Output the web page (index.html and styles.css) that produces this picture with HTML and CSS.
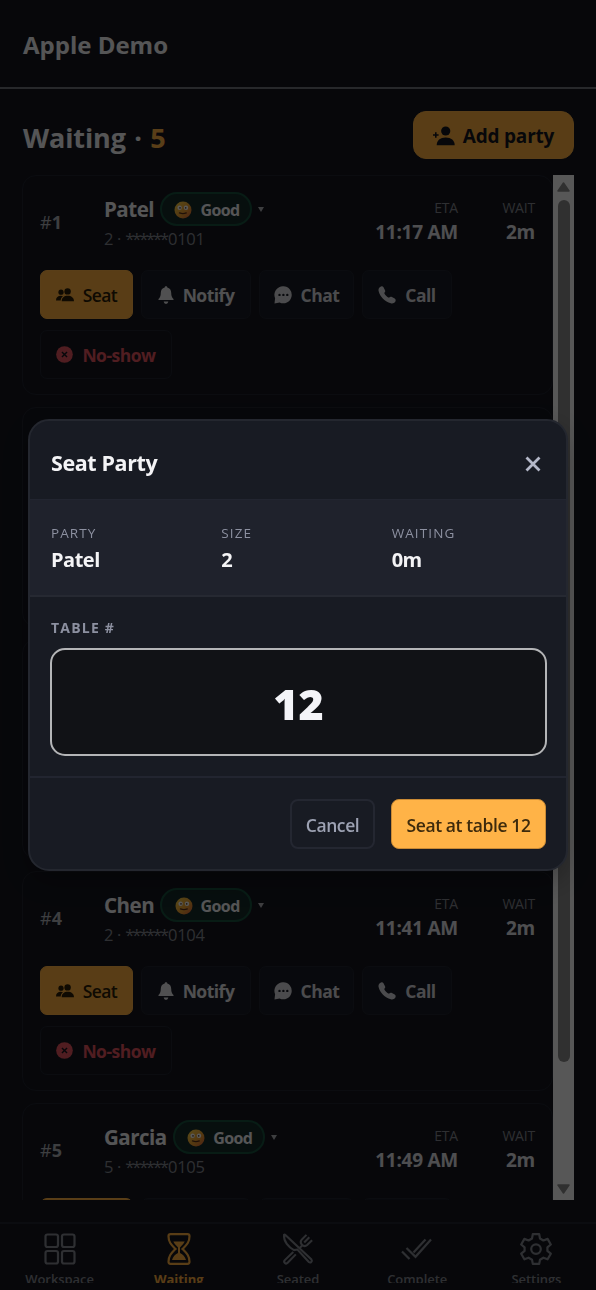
FILE: index.html
```html
<!DOCTYPE html>
<html lang="en">
<head>
    <meta charset="UTF-8" />
    <meta name="viewport" content="width=device-width, initial-scale=1" />
    <title>Apple Demo</title>
    <link rel="stylesheet" href="styles.css">
</head>
<body>
    <!-- shared icons -->
    <svg class="sprite" width="0" height="0">
        <defs>
            <linearGradient id="face" x1="0" y1="0" x2="1" y2="1">
                <stop offset="0" stop-color="#ffd84a" />
                <stop offset=".6" stop-color="#f0a030" />
                <stop offset="1" stop-color="#e0603c" />
            </linearGradient>
        </defs>
        <symbol id="i-smile" viewBox="0 0 18 18">
            <circle cx="9" cy="9" r="8.5" fill="url(#face)" />
            <circle cx="5.600" cy="6.800" r="2.200" fill="#fff" />
            <circle cx="12" cy="6.800" r="2.200" fill="#fff" />
            <circle cx="6" cy="6.900" r=".8" fill="#5a3c24" />
            <circle cx="11.700" cy="6.900" r=".8" fill="#5a3c24" />
            <path d="M5.500 11.900q3.400 1.500 6.800 0" fill="none" stroke="#5a3018" stroke-width="1.300" stroke-linecap="round" />
        </symbol>
        <symbol id="i-seat" viewBox="0 0 18 14">
            <circle cx="5" cy="4.2" r="2.6" />
            <circle cx="11.6" cy="3.4" r="3.2" />
            <path d="M0 12.4c0-3 2-4.6 4.8-4.6 1 0 1.6.2 2.2.5-1.400 1-2.200 2.300-2.300 4.100zM5.700 13.200c0-3.500 2.400-5.400 6-5.400s6.300 1.900 6.300 5.400z" />
        </symbol>
        <symbol id="i-bell" viewBox="0 0 16 18">
            <path d="M8 .3c.8 0 1.300.5 1.300 1.200 2.500.600 3.900 2.600 3.900 5.300 0 3.200.8 4.900 2.300 6.300v1H.5v-1c1.500-1.400 2.300-3.100 2.300-6.300 0-2.700 1.400-4.700 3.900-5.300C6.700.8 7.200.3 8 .3zM5.700 15.400h4.600C10 16.900 9.200 17.700 8 17.700s-2-.8-2.300-2.300z" />
        </symbol>
        <symbol id="i-chat" viewBox="0 0 18 18">
            <path fill-rule="evenodd" d="M9.300.3a8.500 8.500 0 1 1-3.700 16.200L.5 17.500l.6-5.300A8.500 8.500 0 0 1 9.300.3zM5.500 7.700a1.200 1.200 0 1 0 0 2.400 1.200 1.200 0 0 0 0-2.400zm3.900 0a1.200 1.200 0 1 0 0 2.400 1.200 1.200 0 0 0 0-2.400zm3.900 0a1.200 1.200 0 1 0 0 2.400 1.200 1.200 0 0 0 0-2.400z" />
        </symbol>
        <symbol id="i-phone" viewBox="0 0 18 18">
            <path d="M2.100.9C3.400 0 4.800.1 5.500 1.200l1.500 3c.5 1 .2 1.900-.8 2.700.8 2 2.600 3.800 4.800 4.900.9-1 1.900-1.200 2.900-.7l2.800 1.500c1.200.7 1.300 2.100.4 3.400-.9 1.200-2.500 1.800-4.300 1.300C6.900 15.800 2.100 10.900.6 5.100.200 3.300.8 1.800 2.100.9z" />
        </symbol>
        <symbol id="i-cross" viewBox="0 0 18 18">
            <circle cx="9" cy="9" r="8.800" />
            <path d="M6.300 6.300l5.400 5.400M11.700 6.300l-5.400 5.400" stroke="#14161f" stroke-width="1.500" />
        </symbol>
    </svg>

    <header class="topbar">
        <h1>Apple Demo</h1>
    </header>

    <main>
        <div class="heading">
            <h2>Waiting · <span>5</span></h2>
            <button class="add">
                <svg width="22" height="20" viewBox="0 0 22 20"><circle cx="12.700" cy="5" r="4.600" /><path d="M3.700 19.300c0-5 3.500-7.800 9-7.800s9 2.800 9 7.800z" /><path d="M2.800 6.200v5.600M0 9h5.600" stroke="currentColor" stroke-width="1.600" /></svg>
                Add party
            </button>
        </div>

        <div class="list-wrap">
            <ul class="list">
                <li class="card">
                    <div class="info">
                        <span class="pos">#<b>1</b></span>
                        <div class="guest">
                            <div class="name"><strong>Patel</strong><span class="badge"><svg width="18" height="18"><use href="#i-smile" /></svg>Good</span><i class="caret"></i></div>
                            <p>2 · <span>******</span>0101</p>
                        </div>
                        <dl class="eta"><dt>ETA</dt><dd>11:17 AM</dd></dl>
                        <dl class="wait"><dt>WAIT</dt><dd>2m</dd></dl>
                    </div>
                    <div class="actions">
                        <button class="btn seat"><svg width="18" height="14"><use href="#i-seat" /></svg>Seat</button>
                        <button class="btn notify"><svg width="16" height="18"><use href="#i-bell" /></svg>Notify</button>
                        <button class="btn chat"><svg width="18" height="18"><use href="#i-chat" /></svg>Chat</button>
                        <button class="btn call"><svg width="18" height="18"><use href="#i-phone" /></svg>Call</button>
                        <button class="btn noshow"><svg width="17" height="17"><use href="#i-cross" /></svg>No-show</button>
                    </div>
                </li>
                <li class="card"></li>
                <li class="card"></li>
                <li class="card">
                    <div class="info">
                        <span class="pos">#<b>4</b></span>
                        <div class="guest">
                            <div class="name"><strong>Chen</strong><span class="badge"><svg width="18" height="18"><use href="#i-smile" /></svg>Good</span><i class="caret"></i></div>
                            <p>2 · <span>******</span>0104</p>
                        </div>
                        <dl class="eta"><dt>ETA</dt><dd>11:41 AM</dd></dl>
                        <dl class="wait"><dt>WAIT</dt><dd>2m</dd></dl>
                    </div>
                    <div class="actions">
                        <button class="btn seat"><svg width="18" height="14"><use href="#i-seat" /></svg>Seat</button>
                        <button class="btn notify"><svg width="16" height="18"><use href="#i-bell" /></svg>Notify</button>
                        <button class="btn chat"><svg width="18" height="18"><use href="#i-chat" /></svg>Chat</button>
                        <button class="btn call"><svg width="18" height="18"><use href="#i-phone" /></svg>Call</button>
                        <button class="btn noshow"><svg width="17" height="17"><use href="#i-cross" /></svg>No-show</button>
                    </div>
                </li>
                <li class="card">
                    <div class="info">
                        <span class="pos">#<b>5</b></span>
                        <div class="guest">
                            <div class="name"><strong>Garcia</strong><span class="badge"><svg width="18" height="18"><use href="#i-smile" /></svg>Good</span><i class="caret"></i></div>
                            <p>5 · <span>******</span>0105</p>
                        </div>
                        <dl class="eta"><dt>ETA</dt><dd>11:49 AM</dd></dl>
                        <dl class="wait"><dt>WAIT</dt><dd>2m</dd></dl>
                    </div>
                    <div class="actions">
                        <button class="btn seat"></button>
                        <button class="btn notify"></button>
                        <button class="btn chat"></button>
                        <button class="btn call"></button>
                    </div>
                </li>
            </ul>
            <div class="scrollbar">
                <svg width="13" height="10" viewBox="0 0 13 10"><path d="M6.500 1L12 9H1z" stroke-width="1.500" stroke-linejoin="round" /></svg>
                <div class="thumb"></div>
                <svg class="down" width="13" height="10" viewBox="0 0 13 10"><path d="M6.500 9L1 1h11z" stroke-width="1.500" stroke-linejoin="round" /></svg>
            </div>
        </div>
    </main>

    <nav class="tabs">
        <a>
            <svg width="32" height="32" viewBox="0 0 32 32"><rect x="1.500" y="1.500" width="12.500" height="12.500" rx="2" /><rect x="18" y="1.500" width="12.500" height="12.500" rx="2" /><rect x="1.500" y="18" width="12.500" height="12.500" rx="2" /><rect x="18" y="18" width="12.500" height="12.500" rx="2" /></svg>
            <span>Workspace</span>
        </a>
        <a class="active">
            <svg width="32" height="32" viewBox="0 0 32 32"><path d="M7.500 1.200h17q2 0 2 2c0 6.300-3 8.800-7 12.800 4 4 7 6.500 7 12.800q0 2-2 2h-17q-2 0-2-2c0-6.300 3-8.800 7-12.800-4-4-7-6.500-7-12.800q0-2 2-2z" /><path class="solid" d="M10.300 8.600h11.400c-1.200 2.500-3 4-4.700 6v5.400c3 1.500 5 3.500 6 7H9c1-3.500 3-5.500 6-7v-5.400c-1.700-2-3.500-3.500-4.700-6z" /></svg>
            <span>Waiting</span>
        </a>
        <a>
            <svg width="34" height="34" viewBox="0 0 34 34"><path d="M2.200 2C1.500 9 7 15.200 12.800 18.200l3.600-.6L28.500 30.800c1.800 1.500 4.200-.7 2.800-2.600L3.600 2.200q-.8-.7-1.400-.2z" /><path d="M12 20.300l-9 8.500c-1.900 2.300 1 4.900 3 2.900l8.700-9M19 15.600l3-2.900M26 2l-5 5c-1.500 1.800-1.300 3.600-.2 5l.7.800c1.600 1.400 3.600 1.400 5.200 0l5.300-5.200M29 4.600l-5.400 5.400" /></svg>
            <span>Seated</span>
        </a>
        <a>
            <svg class="ticks" width="32" height="32" viewBox="0 0 32 32"><path d="M1 18.500l7.500 7.500M5.500 15l9 8.800L30 6.500M12.500 19.500L24.500 6.500" /></svg>
            <span>Complete</span>
        </a>
        <a>
            <svg width="32" height="32" viewBox="0 0 32 32"><path d="M12.800 1.200h6.400l.8 4.300 3.400 2 4.200-1.600 3.200 5.600-3.400 2.800v3.600l3.400 2.800-3.200 5.600-4.200-1.600-3.400 2-.8 4.200h-6.400l-.8-4.200-3.400-2-4.200 1.600-3.200-5.600 3.400-2.800v-3.600L1.200 11.500l3.200-5.600 4.200 1.600 3.400-2z" stroke-linejoin="round" /><circle cx="16" cy="16.100" r="4.800" /></svg>
            <span>Settings</span>
        </a>
    </nav>

    <div class="overlay">
        <section class="dialog">
            <div class="dialog-head">
                <h3>Seat Party</h3>
                <svg width="16" height="16" viewBox="0 0 16 16"><path d="M1.500 1.500l13 13M14.500 1.500l-13 13" /></svg>
            </div>
            <div class="summary">
                <dl><dt>PARTY</dt><dd>Patel</dd></dl>
                <dl><dt>SIZE</dt><dd>2</dd></dl>
                <dl><dt>WAITING</dt><dd>0m</dd></dl>
            </div>
            <div class="field">
                <label for="table">TABLE #</label>
                <input id="table" type="text" value="12">
            </div>
            <div class="dialog-foot">
                <button class="cancel">Cancel</button>
                <button class="confirm">Seat at table 12</button>
            </div>
        </section>
    </div>
</body>
</html>
```
FILE: styles.css
```css
* {
    margin: 0;
    padding: 0;
    box-sizing: border-box;
}
body {
    height: 100vh;
    overflow: hidden;
    display: flex;
    flex-direction: column;
    background-color: #14161f;
    color: #f4f4f6;
    font-family: "Open Sans", "Noto Sans", sans-serif;
}
button,
input {
    font-family: inherit;
    color: inherit;
}
svg {
    fill: currentColor;
    flex: none;
}
.sprite {
    position: absolute;
}
.topbar {
    height: 89px;
    flex: none;
    padding: 28px 23px 0;
    border-bottom: 2px solid #70737b;
}
.topbar h1 {
    font-size: 24px;
    line-height: 34px;
    font-weight: 700;
    letter-spacing: 0;
}
main {
    height: 1111px;
    flex: none;
    padding: 22px 22px 0;
}
.heading {
    height: 48px;
    display: flex;
    justify-content: space-between;
    align-items: center;
}
.heading h2 {
    font-size: 27px;
    font-weight: 700;
    letter-spacing: -0.1px;
    word-spacing: 1.5px;
    padding: 4px 0 0 1px;
}
.heading h2 span {
    color: #ffb347;
}
.add {
    width: 161px;
    height: 48px;
    display: flex;
    align-items: center;
    justify-content: center;
    gap: 8px;
    padding-top: 2px;
    border: 1px solid #ffb347;
    border-radius: 13px;
    background-color: #ffb03f;
    color: #14161f;
    font-size: 19px;
    font-weight: 700;
    white-space: nowrap;
    letter-spacing: -0.2px;
}
.list-wrap {
    height: 1025px;
    margin-top: 16px;
    display: flex;
    overflow: hidden;
}
.list {
    width: 531px;
    list-style: none;
    display: flex;
    flex-direction: column;
    gap: 12px;
}
.card {
    height: 220px;
    flex: none;
    padding: 16px 17px;
    border: 1px solid #20232e;
    border-radius: 14px;
}
.info {
    height: 78px;
    display: grid;
    grid-template-columns: 64px 1fr 100px 77px;
}
.pos {
    padding-top: 16px;
    font-size: 18px;
    line-height: 28px;
    color: #b0b1b8;
}
.name {
    height: 34px;
    display: flex;
    align-items: center;
}
.name strong {
    font-size: 20.5px;
    font-weight: 700;
    letter-spacing: -0.5px;
}
.badge {
    width: 92px;
    height: 34px;
    margin-left: 6px;
    padding-left: 2px;
    padding-top: 1px;
    display: flex;
    align-items: center;
    justify-content: center;
    gap: 8px;
    border: 2px solid #17523e;
    border-radius: 17px;
    background-color: #142b2a;
    font-size: 16px;
    font-weight: 700;
    letter-spacing: -0.6px;
}
.caret {
    margin-left: 6px;
    border: 3.5px solid transparent;
    border-top: 5px solid #b0b1b8;
    border-bottom: 0;
}
.guest p {
    padding-top: 1px;
    font-size: 16.5px;
    line-height: 24px;
    color: #85878f;
    letter-spacing: -0.3px;
}
.guest p span {
    letter-spacing: -2.1px;
    margin-right: 1px;
}
.info dl {
    padding-top: 4px;
    text-align: right;
    white-space: nowrap;
}
.info dt {
    font-size: 14px;
    line-height: 23px;
    color: #85878f;
    letter-spacing: -0.2px;
}
.info dd {
    font-size: 19px;
    line-height: 26px;
    font-weight: 700;
    letter-spacing: -0.25px;
    color: #e0e0e4;
}
.actions {
    display: flex;
    flex-wrap: wrap;
    gap: 11px 8px;
}
.btn {
    height: 49px;
    display: flex;
    align-items: center;
    justify-content: center;
    gap: 9px;
    border: 1px solid #20232e;
    border-radius: 7px;
    background-color: #191c25;
    color: #d8d8dc;
    font-size: 17.5px;
    font-weight: 700;
    letter-spacing: -0.5px;
}
.seat {
    width: 93px;
    background-color: #ffb03f;
    border-color: #ffb347;
    color: #2b1d08;
    font-weight: 600;
    letter-spacing: -0.6px;
}
.notify {
    width: 110px;
    color: #e4e4e8;
}
.chat {
    width: 95px;
}
.call {
    width: 90px;
}
.noshow {
    width: 132px;
    background-color: transparent;
    color: #e5545e;
}
.scrollbar {
    width: 21px;
    display: flex;
    flex-direction: column;
    align-items: center;
    padding: 7px 0 6px;
    background-color: #fafafa;
    color: #8b8b8b;
}
.scrollbar svg {
    stroke: currentColor;
}
.thumb {
    width: 12px;
    height: 862px;
    margin-top: 8px;
    border-radius: 6px;
    background-color: #8b8b8b;
}
.down {
    margin-top: auto;
}
.tabs {
    height: 61px;
    margin-top: 22px;
    flex: none;
    display: grid;
    grid-template-columns: repeat(5, 1fr);
    border-top: 2px solid #20232e;
    overflow: hidden;
    color: #85878f;
}
.tabs a {
    display: flex;
    flex-direction: column;
    align-items: center;
    padding-top: 9px;
    overflow: hidden;
}
.tabs svg {
    height: 32px;
    fill: none;
    stroke: currentColor;
    stroke-width: 2.2;
}
.tabs .solid {
    fill: currentColor;
    stroke: none;
}
.tabs span {
    margin-top: 5px;
    font-size: 13px;
    line-height: 18px;
    font-weight: 600;
    letter-spacing: -0.05px;
}
.tabs .active {
    color: #ffb03f;
}
.tabs .active span {
    font-weight: 700;
}
.overlay {
    position: fixed;
    inset: 0;
    display: flex;
    justify-content: center;
    align-items: center;
    background-color: rgba(0, 0, 0, 0.65);
}
.dialog {
    width: 540px;
    height: 452px;
    border: 2px solid #24272f;
    border-radius: 21px;
    background-color: #181b23;
    overflow: hidden;
    box-shadow: 0 10px 30px rgba(0, 0, 0, 0.3);
}
.dialog-head {
    height: 79px;
    display: flex;
    justify-content: space-between;
    align-items: center;
    padding: 4px 25px 0 21px;
    border-bottom: 1px solid #222530;
}
.dialog-head h3 {
    font-size: 21.5px;
    font-weight: 700;
    letter-spacing: -0.4px;
}
.dialog-head svg {
    margin-top: 4px;
    stroke: #b4b8c8;
    stroke-width: 2.8;
}
.summary {
    height: 97px;
    display: grid;
    grid-template-columns: repeat(3, 1fr);
    gap: 17px;
    padding: 22px 21px 0;
    border-bottom: 2px solid #262932;
    background-color: #1f222c;
}
.summary dt {
    font-size: 13.5px;
    line-height: 22px;
    letter-spacing: 1.1px;
    color: #8c90a0;
}
.summary dd {
    font-size: 20px;
    line-height: 32px;
    font-weight: 700;
    letter-spacing: -0.5px;
}
.field {
    height: 181px;
    padding: 19px 19px 0 20px;
    border-bottom: 2px solid #222530;
}
.field label {
    display: block;
    padding-left: 1px;
    font-size: 14px;
    line-height: 24px;
    font-weight: 700;
    letter-spacing: 1.2px;
    color: #8c90a0;
}
.field input {
    display: block;
    width: 497px;
    height: 108px;
    margin-top: 8px;
    padding-top: 2px;
    border: 2px solid #b4b5b7;
    border-radius: 15px;
    background-color: #111216;
    color: #f4f4f8;
    font-size: 43px;
    font-weight: 800;
    text-align: center;
    outline: none;
}
.dialog-foot {
    display: flex;
    justify-content: flex-end;
    gap: 16px;
    padding: 21px 20px 0;
}
.dialog-foot button {
    height: 50px;
    padding-top: 2px;
    border-radius: 8px;
    font-size: 17.5px;
    font-weight: 600;
    white-space: nowrap;
    letter-spacing: -0.4px;
}
.dialog-foot .cancel {
    width: 85px;
    border: 2px solid #242731;
    background-color: transparent;
    color: #9da2b3;
}
.dialog-foot .confirm {
    width: 155px;
    border: 1px solid #c98a35;
    background-color: #ffb347;
    color: #3d2a0c;
}
```
